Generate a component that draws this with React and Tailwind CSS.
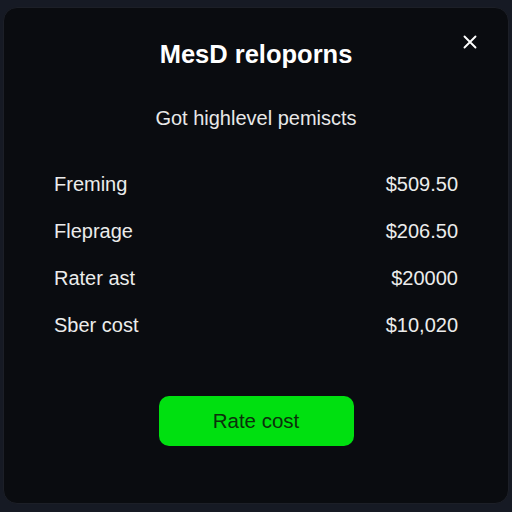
export default function App() {
  const rows = [
    ["Freming", "$509.50"],
    ["Fleprage", "$206.50"],
    ["Rater ast", "$20000"],
    ["Sber cost", "$10,020"],
  ];
  return (
    <div className="w-[512px] h-[512px] bg-[#161a24] p-[3px] pt-[7px] pb-[8px]" style={{ fontFamily: "'Liberation Sans', Arial, sans-serif" }}>
      <div className="relative h-full rounded-[14px] bg-[#0a0c10] border border-[#1c1f27] flex flex-col items-center">
        <button className="absolute right-[31px] top-[27px] text-white">
          <svg width="14" height="14" viewBox="0 0 14 14" fill="none" stroke="currentColor" strokeWidth="1.9" strokeLinecap="round">
            <path d="M1.5 1.5L12.5 12.5M12.5 1.5L1.5 12.5" />
          </svg>
        </button>
        <h1 className="mt-[31px] text-[25.5px] font-bold text-white leading-[30px]">MesD reloporns</h1>
        <p className="mt-[38px] text-[20px] text-[#e8e8e8] leading-[22px]">Got highlevel pemiscts</p>
        <div className="mt-[44px] w-full px-[50px] flex flex-col gap-[25px]">
          {rows.map(([l, v]) => (
            <div key={l} className="flex justify-between text-[20px] leading-[22px] text-[#ececec]">
              <span>{l}</span>
              <span>{v}</span>
            </div>
          ))}
        </div>
        <button className="mt-[60px] w-[195px] h-[50px] rounded-[10px] bg-[#00e010] text-[#0b300b] text-[20.5px]">Rate cost</button>
      </div>
    </div>
  );
}
